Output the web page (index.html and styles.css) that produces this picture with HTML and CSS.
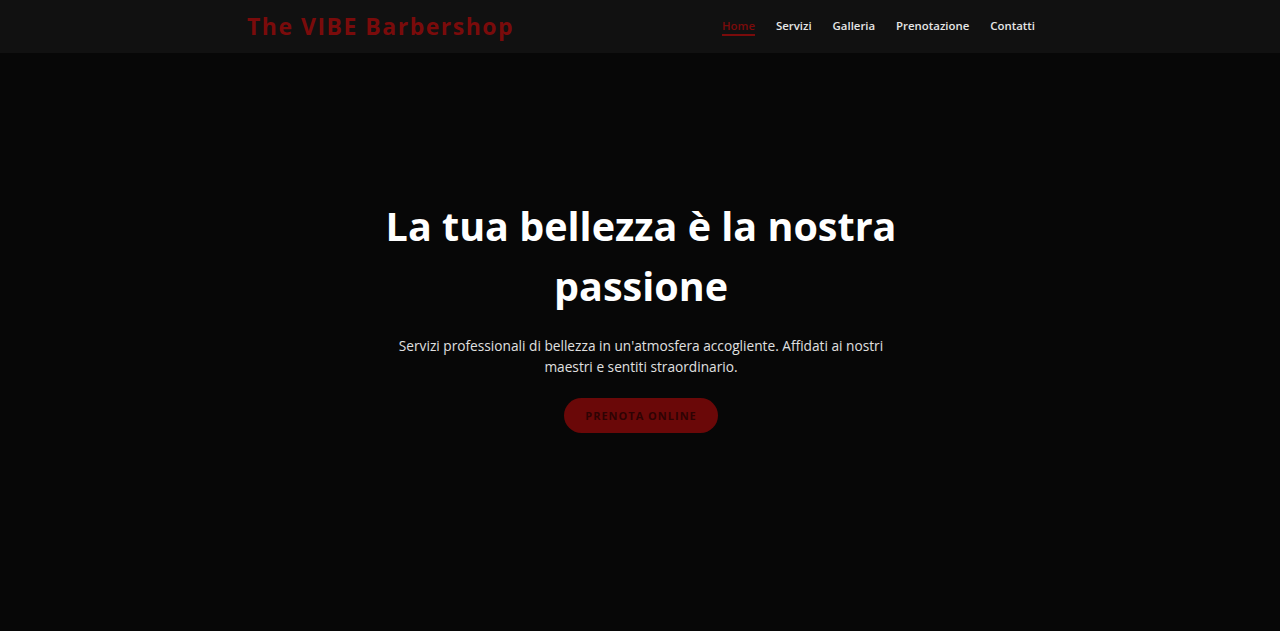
FILE: index.html
```html
<!DOCTYPE html>
<html lang="it">
<head>
<meta charset="utf-8">
<title>The VIBE Barbershop</title>
<link rel="stylesheet" href="styles.css">
</head>
<body>
<header class="site-header">
  <div class="container header-inner">
    <div class="logo">The VIBE Barbershop</div>
    <nav class="nav">
      <a class="nav-link active" href="#">Home</a>
      <a class="nav-link" href="#">Servizi</a>
      <a class="nav-link" href="#">Galleria</a>
      <a class="nav-link" href="#">Prenotazione</a>
      <a class="nav-link" href="#">Contatti</a>
    </nav>
  </div>
</header>
<main class="hero">
  <div class="hero-content">
    <h1 class="hero-title">La tua bellezza è la nostra passione</h1>
    <p class="hero-text">Servizi professionali di bellezza in un'atmosfera accogliente. Affidati ai nostri maestri e sentiti straordinario.</p>
    <a class="btn" href="#">PRENOTA ONLINE</a>
  </div>
</main>
</body>
</html>
```
FILE: styles.css
```css
* { box-sizing: border-box; }
html, body { margin: 0; padding: 0; }
body {
  background: #070707;
  font-family: "Open Sans", "Liberation Sans", sans-serif;
  color: #fff;
  height: 631px;
  overflow: hidden;
}
.site-header {
  background: #111111;
  height: 53px;
}
.container {
  width: 790px;
  margin: 0 auto;
  padding-left: 2px;
}
.header-inner {
  display: flex;
  align-items: center;
  justify-content: space-between;
  height: 53px;
}
.logo {
  color: #7a0b0b;
  font-size: 23px;
  font-weight: 700;
  letter-spacing: 1.5px;
  margin-top: -2px;
}
.nav {
  display: flex;
  gap: 21px;
  margin-top: -4px;
}
.nav-link {
  color: #e6e6e6;
  text-decoration: none;
  font-size: 11.4px;
  font-weight: 600;
  padding: 4px 0 1px;
  border-bottom: 2px solid transparent;
}
.nav-link.active {
  color: #7a0b0b;
  border-bottom-color: #7a0b0b;
}
.hero {
  height: 578px;
  display: flex;
  justify-content: center;
  padding-left: 2px;
}
.hero-content {
  width: 540px;
  padding-top: 143px;
  text-align: center;
}
.hero-title {
  margin: 0;
  font-size: 39.5px;
  line-height: 60px;
  font-weight: 700;
}
.hero-text {
  margin: 19px auto 0;
  width: 500px;
  font-size: 13.7px;
  line-height: 21px;
  color: #e0e0e0;
}
.btn {
  display: inline-block;
  margin-top: 21px;
  width: 154px;
  height: 35px;
  line-height: 35px;
  border-radius: 18px;
  background: #6a0808;
  color: #2e0303;
  font-size: 11px;
  font-weight: 700;
  letter-spacing: 1px;
  text-decoration: none;
}
```
